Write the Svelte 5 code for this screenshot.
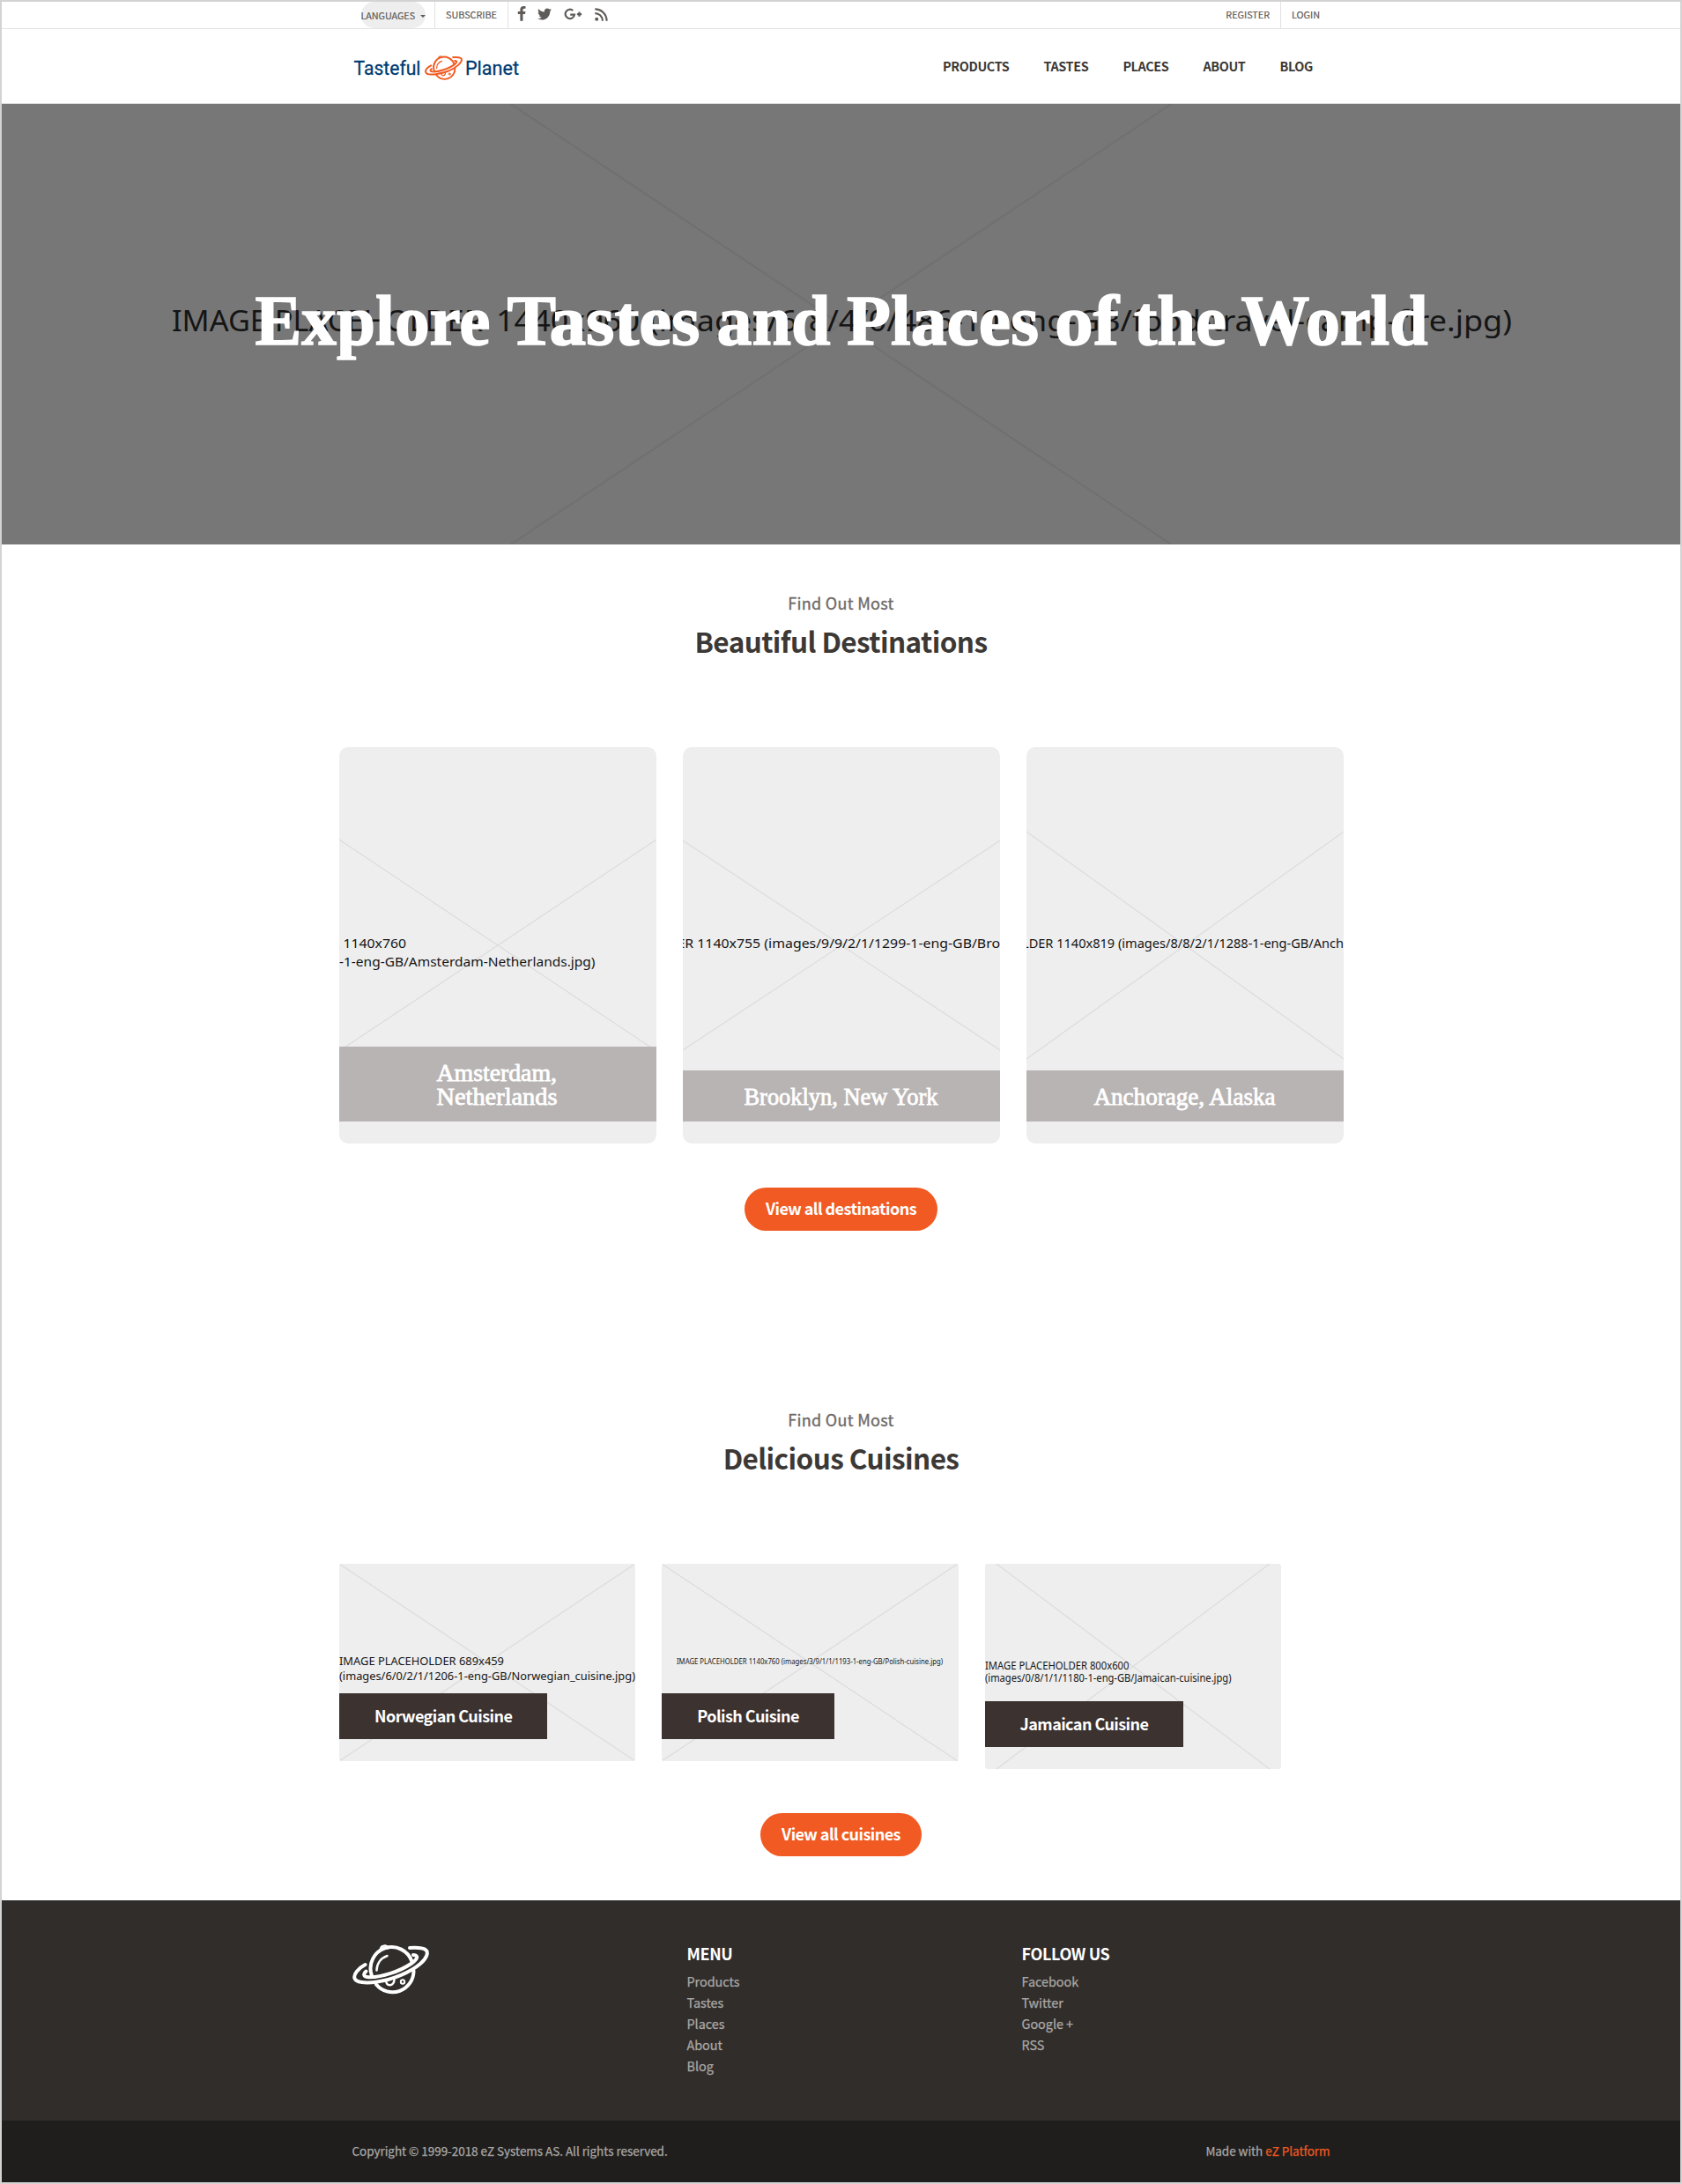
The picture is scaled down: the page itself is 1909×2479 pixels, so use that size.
<script>
  const nav = ['Products', 'Tastes', 'Places', 'About', 'Blog'];
  const follow = ['Facebook', 'Twitter', 'Google +', 'RSS'];

  // Hero title words with their start and drawn length.
  const title = [
    { t: 'Explore', x: 287.5, w: 267 },
    { t: 'Tastes', x: 573.5, w: 219 },
    { t: 'and', x: 811.5, w: 129 },
    { t: 'Places', x: 959, w: 218 },
    { t: 'of', x: 1195, w: 73 },
    { t: 'the', x: 1285, w: 105 },
    { t: 'World', x: 1406.5, w: 212 }
  ];

  // Each placeholder line: text, x, baseline and drawn length inside the card.
  const destinations = [
    {
      name: ['Amsterdam,', 'Netherlands'],
      widths: [136.5, 137],
      x: 110.5,
      rise: 120,
      lines: [
        { t: 'R 1140x760', x: -9.5, y: 228, w: 85.5 },
        { t: '-1-eng-GB/Amsterdam-Netherlands.jpg)', x: 0, y: 249, w: 290.5 }
      ]
    },
    {
      name: ['Brooklyn, New York'],
      widths: [220],
      x: 69.5,
      rise: 119,
      lines: [{ t: 'ER 1140x755 (images/9/9/2/1/1299-1-eng-GB/Bro', x: -6.5, y: 228, w: 366.5 }]
    },
    {
      name: ['Anchorage, Alaska'],
      widths: [206],
      x: 76.5,
      rise: 129,
      lines: [{ t: 'LDER 1140x819 (images/8/8/2/1/1288-1-eng-GB/Anch', x: -5, y: 228, w: 365 }]
    }
  ];

  const cuisines = [
    {
      name: 'Norwegian Cuisine',
      h: 224,
      inset: 0,
      size: 12.5,
      lines: [
        { t: 'IMAGE PLACEHOLDER 689x459', x: 0, y: 115, w: 187 },
        { t: '(images/6/0/2/1/1206-1-eng-GB/Norwegian_cuisine.jpg)', x: 0, y: 132, w: 336 }
      ]
    },
    {
      name: 'Polish Cuisine',
      h: 224,
      inset: 0,
      size: 8,
      lines: [
        { t: 'IMAGE PLACEHOLDER 1140x760 (images/3/9/1/1/1193-1-eng-GB/Polish-cuisine.jpg)', x: 17, y: 114, w: 302 }
      ]
    },
    {
      name: 'Jamaican Cuisine',
      h: 233,
      inset: 13,
      size: 12,
      lines: [
        { t: 'IMAGE PLACEHOLDER 800x600', x: 0, y: 120, w: 163.5 },
        { t: '(images/0/8/1/1/1180-1-eng-GB/Jamaican-cuisine.jpg)', x: 0, y: 134, w: 279.5 }
      ]
    }
  ];
</script>

{#snippet planet()}
  <svg class="planet" viewBox="0 0 87 57" fill="none" stroke="currentColor" stroke-width="4" stroke-linecap="round">
    <path d="M21.8 35A24 24 0 0 1 67.5 19.500" />
    <path d="M27 45.500A24 24 0 0 0 69.500 30" />
    <path d="M14.500 23C6 27.500 1.500 34 2.300 38C3.500 43.500 15 44.500 28 42.500C46 40 66 31.500 77 22C84 16 87 9 83 6.200C79.500 3.600 72 3.600 65 4" />
    <path d="M15.500 30.500C12 34 12 37 19 37.200C33 37.500 54 30.500 66.500 22C73 17.500 76.500 12.500 69 12" />
    <path stroke-width="2.500" d="M32 5.500C32.200 .5 39.500 .5 40 4.500M38.500 40.500C36.500 48 48 49 47.500 39M27.500 29.500C27.500 22 32 15.500 39.500 13" />
    <circle stroke-width="2" cx="57" cy="42.500" r="2.200" />
  </svg>
{/snippet}

{#snippet heading(text)}
  <p class="sub">Find Out Most</p>
  <h2>{text}</h2>
{/snippet}

<div class="page">
  <div class="topbar">
    <div class="inner">
      <a class="pill" href="#lang">LANGUAGES<i class="caret"></i></a>
      <a class="cell" href="#subscribe">SUBSCRIBE</a>
      <div class="social">
        <svg width="18" height="18" viewBox="0 0 1792 1792"><path d="M1343 12v264h-157q-86 0-116 36t-30 108v189h293l-39 296h-254v759h-306v-759h-255v-296h255v-218q0-186 104-288.5t277-102.5q147 0 228 12z" /></svg>
        <svg width="18" height="18" viewBox="0 0 1792 1792"><path d="M1684 408q-67 98-162 167 1 14 1 42 0 130-38 259.5t-115.500 248.500-184.500 210.500-258 146-323 54.500q-271 0-496-145 35 4 78 4 225 0 401-138-105-2-188-64.500t-114-159.500q33 5 61 5 43 0 85-11-112-23-185.500-111.500t-73.500-205.500v-4q68 38 146 41-66-44-105-115t-39-154q0-88 44-163 121 149 294.500 238.500t371.500 99.500q-8-38-8-74 0-134 94.500-228.500t228.500-94.500q140 0 236 102 109-21 205-78-37 115-142 178 93-10 186-50z" /></svg>
        <svg class="gplus" width="21" height="14" viewBox="0 0 21 14"><path d="M10.300 3A5.200 5.200 0 1 0 12 7.700H7.200M17.500 4.600v5.200M14.900 7.200h5.200" fill="none" stroke="currentColor" stroke-width="2.200" /></svg>
        <svg class="rss" width="15" height="15" viewBox="0 0 15 15"><circle cx="2.200" cy="12.700" r="2" /><path d="M.3 6.100A8.500 8.500 0 0 1 8.900 14.700M.3 1.400A13.200 13.200 0 0 1 13.600 14.700" fill="none" stroke="currentColor" stroke-width="2.100" /></svg>
      </div>
      <a class="cell right" href="#register">REGISTER</a>
      <a class="cell last" href="#login">LOGIN</a>
    </div>
  </div>

  <header>
    <div class="inner">
      <a class="brand" href="#home">
        <svg width="77" height="34"><text x="0.500" y="26.500" textLength="76" lengthAdjust="spacingAndGlyphs">Tasteful</text></svg>
        {@render planet()}
        <svg width="63" height="34"><text x="0" y="26.500" textLength="61" lengthAdjust="spacingAndGlyphs">Planet</text></svg>
      </a>
      <nav>
        {#each nav as item}<a href="#{item}">{item}</a>{/each}
      </nav>
    </div>
  </header>

  <section class="hero">
    <svg width="1905" height="500" viewBox="0 0 1905 500">
      <path d="M577.500 0L1327.500 500M1327.500 0L577.500 500" stroke="#707070" stroke-width="2" />
      <g class="alt">
        <text x="193" y="258" textLength="353" lengthAdjust="spacingAndGlyphs">IMAGE PLACEHOLDER</text>
        <text x="561" y="258" textLength="163" lengthAdjust="spacingAndGlyphs">1440x960</text>
        <text x="735" y="258" textLength="979" lengthAdjust="spacingAndGlyphs">(images/6/8/4/0/486-10-eng-GB/food-travel-camp-fire.jpg)</text>
      </g>
      <g class="title">
        {#each title as word}
          <text x={word.x} y="272.500" textLength={word.w} lengthAdjust="spacingAndGlyphs">{word.t}</text>
        {/each}
      </g>
    </svg>
  </section>

  <section class="block">
    {@render heading('Beautiful Destinations')}
    <div class="cards">
      {#each destinations as d}
        <article class="dest">
          <svg class="art" width="360" height="450">
            <path d="M0 {225 - d.rise}L360 {225 + d.rise}M360 {225 - d.rise}L0 {225 + d.rise}" />
            {#each d.lines as l}
              <text x={l.x} y={l.y} textLength={l.w} lengthAdjust="spacingAndGlyphs">{l.t}</text>
            {/each}
          </svg>
          <svg class="label" width="360" height={31 + 27 * d.name.length}>
            {#each d.name as n, i}
              <text x={d.x} y={39 + 27 * i} textLength={d.widths[i]} lengthAdjust="spacingAndGlyphs">{n}</text>
            {/each}
          </svg>
        </article>
      {/each}
    </div>
    <a class="btn" href="#destinations">View all destinations</a>
  </section>

  <section class="block second">
    {@render heading('Delicious Cuisines')}
    <div class="cards cuisines">
      {#each cuisines as c}
        <article class="cuisine">
          <svg class="art" width="337" height={c.h}>
            <path d="M{c.inset} 0L{336 - c.inset} {c.h}M{336 - c.inset} 0L{c.inset} {c.h}" />
            {#each c.lines as l}
              <text x={l.x} y={l.y} font-size={c.size} textLength={l.w} lengthAdjust="spacingAndGlyphs">{l.t}</text>
            {/each}
          </svg>
          <h3>{c.name}</h3>
        </article>
      {/each}
    </div>
    <a class="btn" href="#cuisines">View all cuisines</a>
  </section>

  <footer>
    <div class="inner cols">
      <div>{@render planet()}</div>
      <div>
        <h4>MENU</h4>
        {#each nav as item}<a href="#{item}">{item}</a>{/each}
      </div>
      <div>
        <h4>FOLLOW US</h4>
        {#each follow as item}<a href="#{item}">{item}</a>{/each}
      </div>
    </div>
  </footer>
  <div class="legal">
    <div class="inner">
      <span>Copyright © 1999-2018 eZ Systems AS. All rights reserved.</span>
      <span>Made with <a href="#ez">eZ Platform</a></span>
    </div>
  </div>
</div>

<style>
  .page {
    box-sizing: border-box;
    width: 1909px;
    height: 2479px;
    border: 2px solid #d3d3d3;
    background: #fff;
    color: #3c3835;
    font-family: 'Noto Sans CJK SC', 'Noto Sans', sans-serif;
    overflow: hidden;
  }
  a { color: inherit; text-decoration: none; }
  svg { display: block; flex: none; }
  h2, h3, h4, p { margin: 0; }
  .inner { width: 1110px; margin: 0 auto; display: flex; }

  .topbar { height: 30px; border-bottom: 1px solid #e2e2e2; color: #5f5b58; font-size: 10.8px; line-height: 28px; -webkit-text-stroke: 0.2px; }
  .topbar .inner { height: 30px; width: 1089px; }
  .pill { box-sizing: border-box; display: flex; align-items: center; justify-content: space-between; width: 73px; height: 30px; margin-left: -0.5px; padding-bottom: 1px; background: #eee; border-radius: 15px; letter-spacing: -0.05px; }
  .caret { border: 3px solid transparent; border-top-color: currentColor; border-bottom: 0; margin-top: 4px; }
  .cell { border-left: 1px solid #e2e2e2; padding: 0 12px 0 13px; }
  .pill + .cell { margin-left: 10px; padding-left: 12.500px; }
  .social { display: flex; align-items: flex-start; border-left: 1px solid #e2e2e2; padding: 5px 0 0 6px; fill: currentColor; height: 25px; }
  .social svg + svg { margin-left: 8px; }
  .social .gplus { margin: 2px 0 0 13px; }
  .social .rss { margin: 2px 0 0 14.500px; }
  .cell.right { margin-left: auto; border-left: 0; }
  .cell.last { padding: 0 1px 0 12px; }

  header { height: 84px; border-bottom: 1px solid #d9dcda; }
  header .inner { width: 1105px; height: 84px; align-items: center; justify-content: space-between; }
  .brand { display: flex; align-items: center; height: 34px; color: #f15a22; margin-left: -1px; }
  .brand svg { overflow: visible; }
  .brand text { font: 400 22.500px Roboto, sans-serif; fill: #003b71; stroke: #003b71; stroke-width: 0.3px; }
  .brand .planet { width: 43px; margin: 5px 3px 0 4px; }
  nav { display: flex; gap: 39px; margin: 0 17px 2px 0; text-transform: uppercase; font-size: 14.400px; font-weight: 600; letter-spacing: -0.36px; }

  .hero { height: 500px; background: #777; }
  .hero .alt { font: 33px 'Noto Sans', sans-serif; fill: #151515; }
  .hero .title { font: bold 81px 'Liberation Serif', serif; fill: #fff; stroke: #fff; stroke-width: 1.5px; }

  .block { box-sizing: border-box; height: 927px; padding-top: 51px; display: flex; flex-direction: column; align-items: center; }
  .block.second { height: 612px; }
  .sub { font-size: 18px; line-height: 30px; color: #6f6a67; letter-spacing: 0.3px; -webkit-text-stroke: 0.35px; }
  h2 { margin-top: 6px; font-size: 31.500px; line-height: 44px; font-weight: 600; letter-spacing: -0.58px; }
  .cards { display: flex; gap: 30px; width: 1139px; height: 450px; margin-top: 99px; }
  .cuisines { height: 233px; align-items: flex-start; }
  .dest, .cuisine { flex: none; display: grid; background: #eee; overflow: hidden; }
  .dest { width: 360px; height: 450px; border-radius: 10px; }
  .cuisine { width: 336.300px; border-radius: 3px; }
  .art { grid-area: 1 / 1; }
  .art path { stroke: #dcdcdc; stroke-width: 1.2; fill: none; }
  .art text { font-family: 'Noto Sans', sans-serif; fill: #151515; }
  .dest .art text { font-size: 14px; }
  .label { grid-area: 1 / 1; align-self: end; margin-bottom: 25px; background: #b8b4b3; }
  .label text { font: 27px 'Liberation Serif', serif; fill: #fff; stroke: #fff; stroke-width: 0.8px; }
  h3 { grid-area: 1 / 1; place-self: end start; box-sizing: border-box; height: 52px; margin-bottom: 25px; padding: 0 40px; background: #3c3230; color: #fff; font-size: 18px; line-height: 50px; font-weight: 600; letter-spacing: -0.56px; z-index: 1; }
  .btn { margin-top: 50px; height: 49px; line-height: 47px; padding: 0 24px; border-radius: 25px; background: #f15a22; color: #fff; font-size: 18px; font-weight: 600; letter-spacing: -0.56px; }

  footer { height: 250px; background: #312d2b; color: #aaa8a6; }
  .cols { padding-top: 50px; }
  .cols > div { width: 380px; flex: none; }
  .cols .planet { width: 87px; color: #fff; }
  h4 { color: #fff; font-size: 18px; font-weight: 700; line-height: 20px; margin-bottom: 10px; letter-spacing: -0.35px; }
  .cols a { display: block; font-size: 14.400px; line-height: 24px; -webkit-text-stroke: 0.25px; letter-spacing: -0.02px; }
  .legal { height: 70px; background: #1f1e1d; color: #aaa8a6; font-size: 13.500px; line-height: 68px; -webkit-text-stroke: 0.25px; letter-spacing: -0.04px; }
  .legal .inner { justify-content: space-between; }
  .legal a { color: #f15a22; }
</style>
